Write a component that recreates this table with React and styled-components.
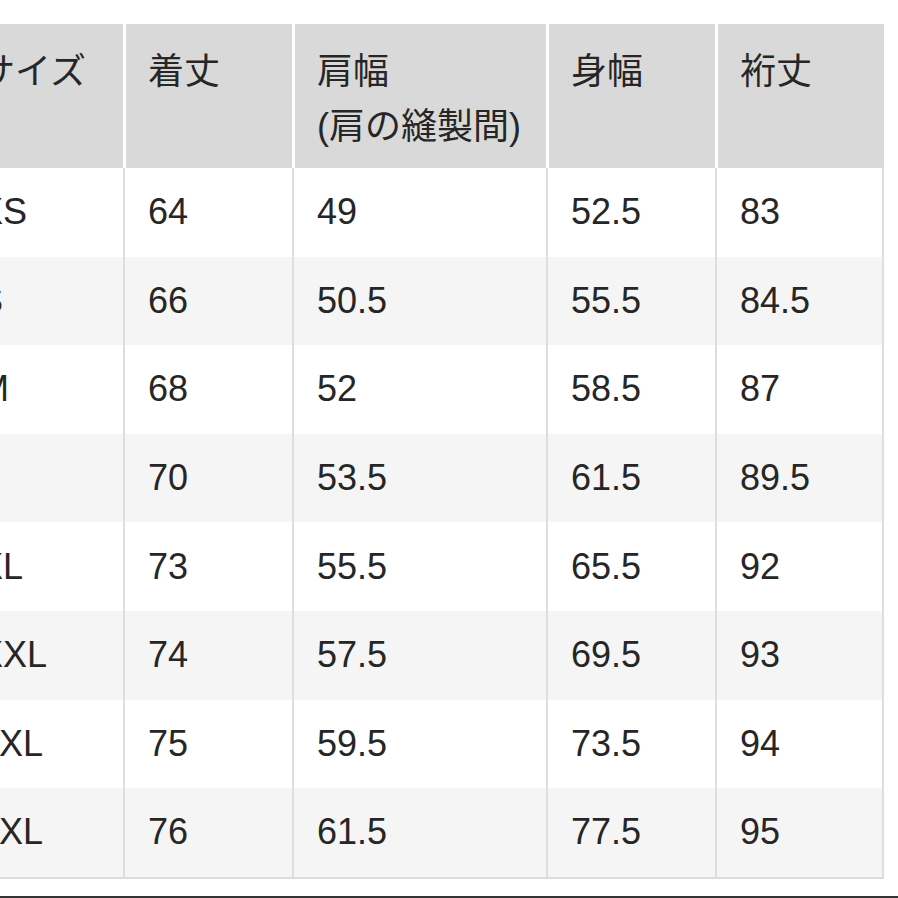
import React from 'react';
import styled, { createGlobalStyle } from 'styled-components';

const GlobalStyle = createGlobalStyle`
  html, body {
    margin: 0;
    padding: 0;
    background: #fff;
    overflow: hidden;
  }
  body {
    font-family: "Liberation Sans", "Noto Sans CJK JP", sans-serif;
    color: #262626;
  }
`;

const headers = [
  ['サイズ'],
  ['着丈'],
  ['肩幅', '(肩の縫製間)'],
  ['身幅'],
  ['裄丈'],
];

const rows = [
  ['XS', '64', '49', '52.5', '83'],
  ['S', '66', '50.5', '55.5', '84.5'],
  ['M', '68', '52', '58.5', '87'],
  ['L', '70', '53.5', '61.5', '89.5'],
  ['XL', '73', '55.5', '65.5', '92'],
  ['XXL', '74', '57.5', '69.5', '93'],
  ['3XL', '75', '59.5', '73.5', '94'],
  ['4XL', '76', '61.5', '77.5', '95'],
];

function App() {
  return (
    <Page>
      <GlobalStyle />
      <SizeTable>
        <HeadRow>
          {headers.map((lines, i) => (
            <HeadCell key={i} first={i === 0}>
              {lines.map((l) => (
                <div key={l}>{l}</div>
              ))}
            </HeadCell>
          ))}
        </HeadRow>
        {rows.map((r, ri) => (
          <BodyRow key={r[0]} striped={ri % 2 === 1}>
            {r.map((v, ci) => (
              <BodyCell key={ci} first={ci === 0} last={ci === r.length - 1}>
                {v}
              </BodyCell>
            ))}
          </BodyRow>
        ))}
      </SizeTable>
      <FooterRule />
    </Page>
  );
}

const Page = styled.div`
  width: 898px;
  height: 898px;
  padding-top: 24px;
  box-sizing: border-box;
  display: flex;
  flex-direction: column;
`;

// the sheet is cropped on the left, so the first column runs off the edge
const SizeTable = styled.div`
  margin-left: -46px;
  width: 930px;
  display: flex;
  flex-direction: column;
  border-bottom: 2px solid #dcdcdc;
`;

const cols = '169px 169px 254px 169px 169px';

const HeadRow = styled.div`
  display: grid;
  grid-template-columns: ${cols};
  height: 144px;
  background: #d9d9d9;
`;

const HeadCell = styled.div`
  box-sizing: border-box;
  padding: 20px 0 0 ${(p) => (p.first ? 25 : 22)}px;
  border-left: ${(p) => (p.first ? 'none' : '3px solid #fff')};
  font-size: 36px;
  line-height: 55px;
  white-space: nowrap;
`;

const BodyRow = styled.div`
  display: grid;
  grid-template-columns: ${cols};
  height: 88.6px;
  background: ${(p) => (p.striped ? '#f5f5f5' : '#fff')};
`;

const BodyCell = styled.div`
  box-sizing: border-box;
  display: flex;
  align-items: center;
  padding-left: ${(p) => (p.first ? 25 : 23)}px;
  border-left: ${(p) => (p.first ? 'none' : '2px solid #dedede')};
  border-right: ${(p) => (p.last ? '2px solid #dedede' : 'none')};
  font-size: 36px;
`;

const FooterRule = styled.div`
  margin-top: auto;
  height: 2px;
  background: #333;
`;

export default App;
